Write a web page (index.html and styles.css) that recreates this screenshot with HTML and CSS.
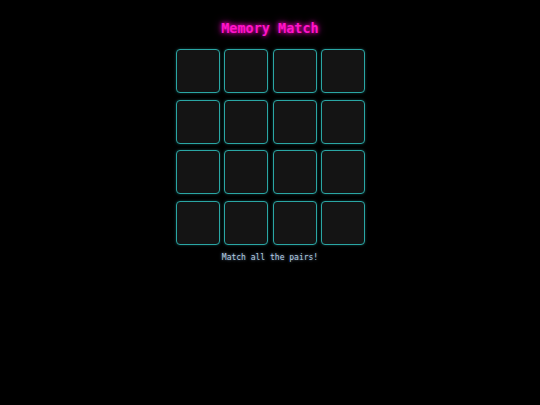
FILE: index.html
```html
<!DOCTYPE html>
<html>
<head>
<meta charset="utf-8">
<link rel="stylesheet" href="styles.css">
</head>
<body>
<div class="app">
  <h1 class="title">Memory Match</h1>
  <div class="board">
    <div class="card"></div><div class="card"></div><div class="card"></div><div class="card"></div>
    <div class="card"></div><div class="card"></div><div class="card"></div><div class="card"></div>
    <div class="card"></div><div class="card"></div><div class="card"></div><div class="card"></div>
    <div class="card"></div><div class="card"></div><div class="card"></div><div class="card"></div>
  </div>
  <p class="status">Match all the pairs!</p>
</div>
</body>
</html>
```
FILE: styles.css
```css
html, body {
  margin: 0;
  padding: 0;
  background: #000;
  width: 540px;
  height: 405px;
  overflow: hidden;
}
.app {
  display: flex;
  flex-direction: column;
  align-items: center;
  font-family: "DejaVu Sans Mono", monospace;
  padding-top: 20px;
}
.title {
  margin: 0;
  font-size: 13.5px;
  line-height: 16px;
  font-weight: bold;
  color: #ff14c8;
  text-shadow: 0 0 4px #ff00c8, 0 0 8px rgba(255, 0, 200, 0.6);
}
.board {
  margin: 13px 0 0 1px;
  display: grid;
  grid-template-columns: repeat(4, 44px);
  grid-auto-rows: 44px;
  column-gap: 4.67px;
  row-gap: 6.5px;
}
.card {
  box-sizing: border-box;
  background: #141414;
  border: 1px solid #2aa6a4;
  border-radius: 4px;
  box-shadow: 0 0 3px rgba(42, 166, 164, 0.4);
}
.status {
  margin: 8px 0 0 0;
  font-size: 8px;
  line-height: 10px;
  color: #b4cce0;
  text-shadow: 0 0 3px rgba(150, 190, 230, 0.7);
}
```
